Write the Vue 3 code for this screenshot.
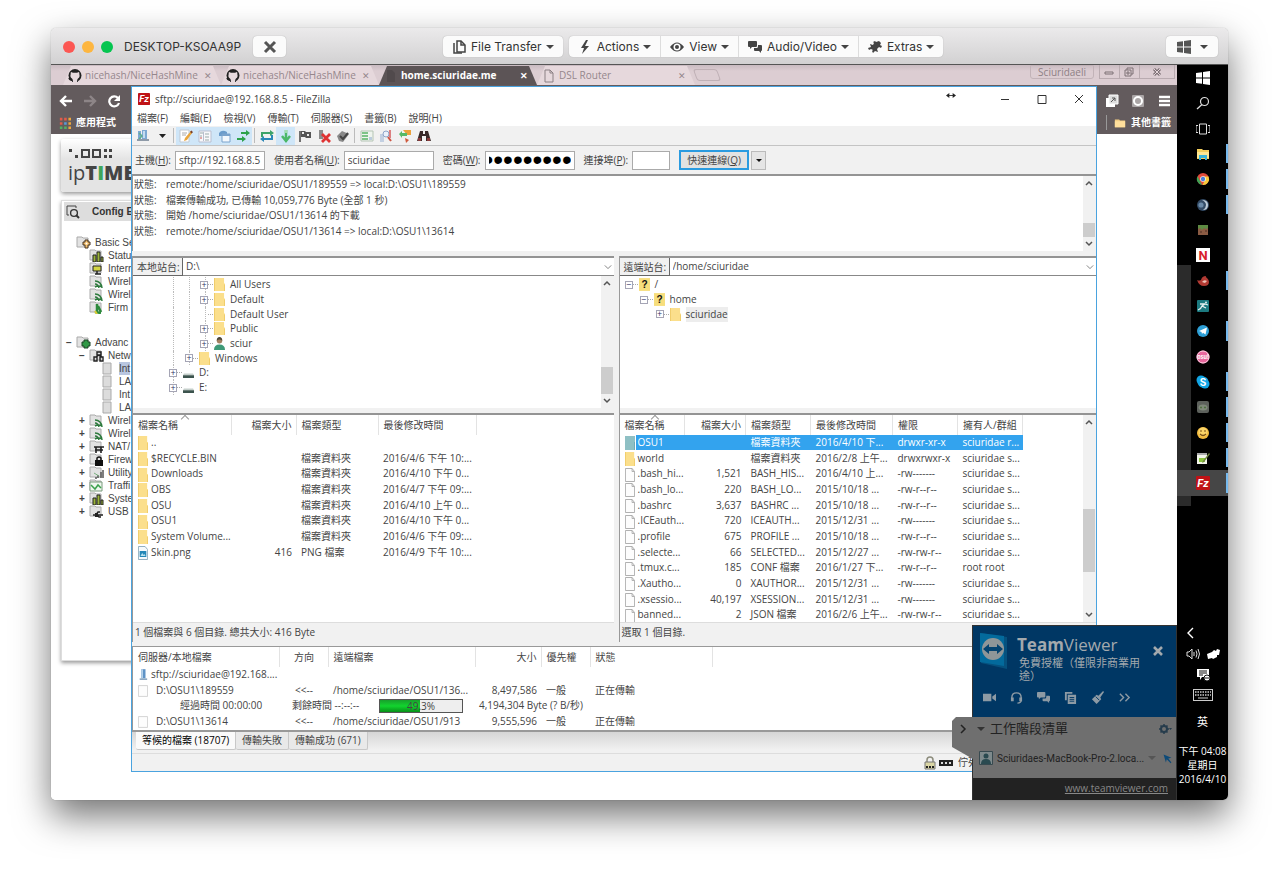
<template>
    <main class="page">
        <section class="mac">
            <header class="titlebar">
                <div class="lights"><i class="red"></i><i class="amber"></i><i class="green"></i></div>
                <h1>DESKTOP-KSOAA9P</h1>
                <button class="pill close" aria-label="Close"><svg viewBox="0 0 14 14" v-html="icons.cross"></svg></button>
                <div class="pills first">
                    <button class="pill"><svg viewBox="0 0 14 14" v-html="icons.files"></svg>File Transfer<b class="caret"></b></button>
                </div>
                <div class="pills">
                    <button v-for="m in macMenus" :key="m.label" class="pill"><svg viewBox="0 0 14 14" v-html="icons[m.icon]"></svg>{{m.label}}<b class="caret"></b></button>
                </div>
                <button class="pill os" aria-label="Windows"><svg viewBox="0 0 14 14" v-html="icons.win"></svg><b class="caret"></b></button>
            </header>

            <div class="desktop">
                <div class="browser">
                    <div class="tabs">
                        <div v-for="(t, i) in tabs" :key="i" class="tab" :class="{active: t.active}">
                            <svg viewBox="0 0 14 14" v-html="icons[t.icon]"></svg>
                            <span>{{t.title}}</span>
                            <button aria-label="Close tab">✕</button>
                        </div>
                        <button class="new-tab" aria-label="New tab"></button>
                        <button class="profile">Sciuridaeli</button>
                        <div class="chrome-ctl">
                            <button aria-label="Minimize"><svg viewBox="0 0 14 10"><path d="M3 5h8v2H3z" fill="none" stroke="#7d7075"/></svg></button>
                            <button aria-label="Restore"><svg viewBox="0 0 14 10"><path d="M3 3h6v6H3zM5 3V1h6v6H9M5 5h2v2H5z" fill="none" stroke="#7d7075"/></svg></button>
                            <button aria-label="Close"><svg viewBox="0 0 14 10"><path d="M4 2l6 6M10 2L4 8" stroke="#7d7075" stroke-width="3"/><path d="M4 2l6 6M10 2L4 8" stroke="#e4d6da"/></svg></button>
                        </div>
                    </div>
                    <div class="toolbar">
                        <div class="nav">
                            <button aria-label="Back"><svg viewBox="0 0 14 14"><path d="M13 7H3M7 2L2 7l5 5" fill="none" stroke="#fff" stroke-width="2.4"/></svg></button>
                            <button aria-label="Forward"><svg viewBox="0 0 14 14"><path d="M1 7h10M7 2l5 5-5 5" fill="none" stroke="#8d8587" stroke-width="2.4"/></svg></button>
                            <button aria-label="Reload"><svg viewBox="0 0 14 14"><path d="M12 9a5 5 0 1 1-1-5" fill="none" stroke="#fff" stroke-width="2.2"/><path d="M13 1v6H7z" fill="#fff"/></svg></button>
                            <i class="omni"></i>
                            <div class="ext">
                                <button aria-label="Open window"><svg viewBox="0 0 14 14"><path d="M1 4h9v9H1z" fill="#fff"/><path d="M4 1h9v9H4z" fill="#ddd" stroke="#fff"/><path d="M6 8l4-4M7 4h3v3" stroke="#555" fill="none"/></svg></button>
                                <button aria-label="Extension"><svg viewBox="0 0 14 14"><rect x="1" y="1" width="12" height="12" rx="1" fill="#aaa5a6"/><circle cx="7" cy="7" r="4" fill="none" stroke="#fff" stroke-width="2"/></svg></button>
                                <button aria-label="Menu"><svg viewBox="0 0 14 14"><path d="M2 3h11M2 7h11M2 11h11" stroke="#fff" stroke-width="2.6"/></svg></button>
                            </div>
                        </div>
                        <div class="bookmarks">
                            <a href="#"><svg viewBox="0 0 14 14" v-html="icons.apps"></svg>應用程式</a>
                            <a href="#" class="other"><svg viewBox="0 0 14 14"><path d="M1 3h5l1 1h6v8H1z" fill="#f3cd83"/><path d="M1 5h12v7H1z" fill="#ffdf9c"/></svg>其他書籤</a>
                        </div>
                    </div>
                    <div class="router">
                        <div class="logo">
                            <svg viewBox="0 0 46 12"><path d="M1 2h3v3H1zM7 8h3v3H7z" fill="#444"/><path d="M14 3h7v7h-7zM25 3h7v7h-7z" fill="none" stroke="#444" stroke-width="2"/><path d="M36 2h3v3h-3zM41 2h3v3h-3zM36 8h3v3h-3zM41 8h3v3h-3z" fill="#444"/></svg>
                            <p>ip<b>T<em>I</em>ME</b></p>
                        </div>
                        <div class="config">
                            <h2><svg viewBox="0 0 14 14"><path d="M3 10H1V1h9v2" fill="none" stroke="#444"/><circle cx="8" cy="8" r="3.4" fill="#ddd" stroke="#333" stroke-width="1.4"/><path d="M10 10l3 3" stroke="#333" stroke-width="2"/></svg>Config E</h2>
                            <ul>
                                <li v-for="(r, i) in routerTree" :key="i" :class="['l' + r.level, {gap: r.gap, on: r.on}]">
                                    <i>{{r.mark}}</i>
                                    <svg viewBox="0 0 15 13" v-html="(r.level < 2 ? icons.rfolder : '') + icons[r.icon]"></svg>
                                    <span>{{r.label}}</span>
                                </li>
                            </ul>
                        </div>
                    </div>
                </div>

                <nav class="taskbar">
                    <i class="ghost"></i>
                    <button v-for="a in apps" :key="a.icon" :class="{run: a.run, cur: a.cur}" :aria-label="a.icon"><svg viewBox="0 0 14 14" v-html="icons[a.icon]"></svg></button>
                    <div class="tray">
                        <svg class="up" viewBox="0 0 14 14"><path d="M9 2L4 7l5 5" fill="none" stroke="#fff" stroke-width="1.4"/></svg>
                        <div class="pair">
                            <svg viewBox="0 0 14 14"><path d="M1 5h2l3-3v10L3 9H1zM8 5v4M10 3.5q2 3.500 0 7M12 2q3 5 0 10" fill="none" stroke="#ddd"/></svg>
                            <svg viewBox="0 0 14 14"><path d="M1 7l1 5 4-1 1 1 4-2V8h2l1-5-3-1-1 2-2-1-2 2z" fill="#fff"/></svg>
                        </div>
                        <svg viewBox="0 0 14 14"><path d="M1 1h12v8H6l-2 3V9H1z" fill="#fff"/><path d="M3 3h8M3 5h8M3 7h4" stroke="#111"/><circle cx="11" cy="10" r="3" fill="#fff" stroke="#111"/><path d="M9 10h4" stroke="#111"/></svg>
                        <svg class="kbd" viewBox="0 0 20 12"><rect x=".5" y=".5" width="19" height="11" fill="none" stroke="#ccc"/><path d="M2 3h16M2 6h16" stroke="#ccc" stroke-width="1.500" stroke-dasharray="1.500 1"/><path d="M5 9h10" stroke="#ccc"/></svg>
                        <span class="ime">英</span>
                        <time>下午 04:08<br>星期日<br>2016/4/10</time>
                    </div>
                </nav>

                <section class="fz">
                    <header class="fz-title">
                        <svg viewBox="0 0 14 14" v-html="icons.fz"></svg>
                        <span>sftp://sciuridae@192.168.8.5 - FileZilla</span>
                        <svg class="resize" viewBox="0 0 12 8"><path d="M2 4h8" stroke="#222"/><path d="M0 4l4-3v6zM12 4L8 1v6z" fill="#222"/></svg>
                        <button aria-label="Minimize"><svg viewBox="0 0 10 10"><path d="M1 5.500h8" stroke="#333"/></svg></button>
                        <button aria-label="Maximize"><svg viewBox="0 0 10 10"><path d="M1 1.500h8v8H1z" fill="none" stroke="#333"/></svg></button>
                        <button aria-label="Close"><svg viewBox="0 0 10 10"><path d="M1 1l8 8M9 1L1 9" stroke="#333"/></svg></button>
                    </header>
                    <div class="menu"><button v-for="m in menus" :key="m">{{m}}</button></div>
                    <div class="tools">
                        <template v-for="(t, i) in tools" :key="i">
                            <i v-if="t === '|'" class="sep"></i>
                            <button v-else :class="{on: t.on}" :aria-label="t.icon"><svg viewBox="0 0 14 14" v-html="icons[t.icon]"></svg></button>
                        </template>
                    </div>
                    <form class="quick" @submit.prevent>
                        <label for="host">主機(<u>H</u>):</label><input id="host" v-model="host">
                        <label for="user">使用者名稱(<u>U</u>):</label><input id="user" v-model="user">
                        <label for="pass">密碼(<u>W</u>):</label><input id="pass" type="password" v-model="pass">
                        <label for="port">連接埠(<u>P</u>):</label><input id="port" class="port" v-model="port">
                        <button class="go">快速連線(<u>Q</u>)</button>
                        <button type="button" class="drop" aria-label="History"><b class="caret"></b></button>
                    </form>
                    <div class="log sunk">
                        <div class="lines">
                            <p v-for="(l, i) in log" :key="i"><span>狀態:</span>{{l}}</p>
                        </div>
                        <div class="sb"><button aria-label="Up"><svg viewBox="0 0 10 10" v-html="icons.up"></svg></button><i class="t1"></i><button aria-label="Down"><svg viewBox="0 0 10 10" v-html="icons.down"></svg></button></div>
                    </div>

                    <div class="panes">
                        <div class="pane local">
                            <div class="site sunk">
                                <label for="lsite">本地站台:</label>
                                <select id="lsite"><option>D:\</option></select>
                                <svg viewBox="0 0 10 10" v-html="icons.chev"></svg>
                            </div>
                            <div class="tree">
                                <ul>
                                    <li v-for="n in localTree" :key="n.name" :class="'d' + n.depth">
                                        <i class="guide"></i>
                                        <i class="box">{{n.leaf ? '' : '+'}}</i><i class="dash"></i>
                                        <svg viewBox="0 0 12 14" v-html="icons[n.icon]"></svg><span>{{n.name}}</span>
                                    </li>
                                </ul>
                                <div class="sb"><button aria-label="Up"><svg viewBox="0 0 10 10" v-html="icons.up"></svg></button><i class="t2"></i><button aria-label="Down"><svg viewBox="0 0 10 10" v-html="icons.down"></svg></button></div>
                            </div>
                            <div class="list sunk">
                                <table class="ltable">
                                    <colgroup><col class="c98"><col class="c65"><col class="c82"><col class="c98"></colgroup>
                                    <thead><tr><th class="sort">檔案名稱</th><th class="num">檔案大小</th><th>檔案類型</th><th>最後修改時間</th></tr></thead>
                                    <tbody>
                                        <tr v-for="f in localFiles" :key="f[0]">
                                            <td><svg viewBox="0 0 12 14" preserveAspectRatio="none" v-html="icons[f[4] || 'folder']"></svg>{{f[0]}}</td>
                                            <td class="num">{{f[1]}}</td><td>{{f[2]}}</td><td>{{f[3]}}</td>
                                        </tr>
                                    </tbody>
                                </table>
                            </div>
                            <p class="sum">1 個檔案與 6 個目錄. 總共大小: 416 Byte</p>
                        </div>

                        <div class="pane remote">
                            <div class="site sunk">
                                <label for="rsite">遠端站台:</label>
                                <select id="rsite"><option>/home/sciuridae</option></select>
                                <svg viewBox="0 0 10 10" v-html="icons.chev"></svg>
                            </div>
                            <div class="tree">
                                <ul>
                                    <li class="r0"><i class="box">−</i><i class="dash"></i><svg viewBox="0 0 12 14" v-html="icons.unknown"></svg><span>/</span></li>
                                    <li class="r1"><i class="box">−</i><i class="dash"></i><svg viewBox="0 0 12 14" v-html="icons.unknown"></svg><span>home</span></li>
                                    <li class="r2"><i class="box">+</i><i class="dash"></i><svg viewBox="0 0 12 14" v-html="icons.folder"></svg><span class="hl">sciuridae</span></li>
                                </ul>
                            </div>
                            <div class="list sunk">
                                <table class="rtable">
                                    <colgroup><col class="c65"><col class="c61"><col class="c65"><col class="c82"><col class="c65"><col class="c65"></colgroup>
                                    <thead><tr><th class="sort">檔案名稱</th><th class="num">檔案大小</th><th>檔案類型</th><th>最後修改時間</th><th>權限</th><th>擁有人/群組</th></tr></thead>
                                    <tbody>
                                        <tr v-for="(f, i) in remoteFiles" :key="f[0]" :class="{sel: i === 0}">
                                            <td><svg viewBox="0 0 12 14" preserveAspectRatio="none" v-html="icons[i === 0 ? 'folderSel' : i === 1 ? 'folder' : 'doc']"></svg>{{f[0]}}</td>
                                            <td class="num">{{f[1]}}</td><td>{{f[2]}}</td><td>{{f[3]}}</td><td>{{f[4]}}</td><td>{{f[5]}}</td>
                                        </tr>
                                    </tbody>
                                </table>
                                <div class="sb"><button aria-label="Up"><svg viewBox="0 0 10 10" v-html="icons.up"></svg></button><i class="t3"></i><button aria-label="Down"><svg viewBox="0 0 10 10" v-html="icons.down"></svg></button></div>
                            </div>
                            <p class="sum">選取 1 個目錄.</p>
                        </div>
                    </div>

                    <div class="queue">
                        <table>
                            <colgroup><col class="c146"><col class="c49"><col class="c147"><col class="c66"><col class="c49"><col class="c122"></colgroup>
                            <thead><tr><th>伺服器/本地檔案</th><th class="mid">方向</th><th>遠端檔案</th><th class="num">大小</th><th>優先權</th><th>狀態</th></tr></thead>
                            <tbody>
                                <tr><td colspan="6"><svg viewBox="0 0 12 14" v-html="icons.server"></svg>sftp://sciuridae@192.168....</td></tr>
                                <tr><td><svg class="doc" viewBox="0 0 12 14" v-html="icons.blank"></svg>D:\OSU1\189559</td><td class="mid">&lt;&lt;--</td><td>/home/sciuridae/OSU1/136...</td><td class="num">8,497,586</td><td>一般</td><td>正在傳輸</td></tr>
                                <tr><td colspan="6"><div class="progress"><span class="el">經過時間 00:00:00</span><span class="left">剩餘時間 --:--:--</span><div class="bar"><i :style="{width: percent + '%'}"></i><b>{{percent}}%</b></div><span>4,194,304 Byte (? B/秒)</span></div></td></tr>
                                <tr><td><svg class="doc" viewBox="0 0 12 14" v-html="icons.blank"></svg>D:\OSU1\13614</td><td class="mid">&lt;&lt;--</td><td>/home/sciuridae/OSU1/913</td><td class="num">9,555,596</td><td>一般</td><td>正在傳輸</td></tr>
                            </tbody>
                        </table>
                    </div>
                    <div class="qtabs">
                        <button class="on">等候的檔案 (18707)</button><button>傳輸失敗</button><button>傳輸成功 (671)</button>
                    </div>
                    <footer>
                        <svg viewBox="0 0 14 14"><path d="M4 6V4a3 3 0 0 1 6 0v2" fill="none" stroke="#8c8c7c" stroke-width="1.500"/><path d="M2 6h10v7H2z" fill="#d9d5a4" stroke="#777"/><path d="M3 11h8" stroke="#222" stroke-width="2" stroke-dasharray="2 1"/></svg>
                        <svg viewBox="0 0 14 14"><path d="M0 4h14v6H0z" fill="#222"/><path d="M2 7h2M6 7h2M10 7h2" stroke="#ddd" stroke-width="2"/></svg>
                        <span>佇列</span>
                    </footer>
                </section>

                <aside class="tv">
                    <button class="handle" aria-label="Collapse"><svg viewBox="0 0 10 10"><path d="M3 1l4 4-4 4" fill="none" stroke="#222" stroke-width="1.500"/></svg></button>
                    <div class="tv-top">
                        <div class="tv-head">
                            <svg class="tvlogo" viewBox="0 0 30 38"><path d="M2 1l26 4v32L2 31z" fill="#06517e"/><path d="M1 1l24 3v30L1 30z" fill="#036a9c"/><circle cx="14" cy="17" r="11" fill="#8f9698"/><path d="M4 17l6-5v3h8v-3l6 5-6 5v-3h-8v3z" fill="#05436f"/></svg>
                            <div><h3><b>Team</b>Viewer</h3><p>免費授權（僅限非商業用途）</p></div>
                            <button aria-label="Close"><svg viewBox="0 0 14 14"><path d="M3 3l8 8M11 3l-8 8" stroke="#a3a9ad" stroke-width="2.6"/></svg></button>
                        </div>
                        <div class="tv-icons">
                            <button v-for="n in ['cam', 'headset', 'chatg', 'copy', 'brush', 'more']" :key="n" :aria-label="n"><svg viewBox="0 0 14 14" v-html="icons[n]"></svg></button>
                        </div>
                    </div>
                    <div class="tv-list">
                        <h4><b class="caret"></b>工作階段清單<svg viewBox="0 0 14 14"><circle cx="6" cy="7" r="3" fill="none" stroke="#263c4c" stroke-width="2"/><path d="M6 2v2M6 10v2M1 7h2M9 7h2M2.500 3.500l1 1M8.500 9.500l1 1M9.500 3.500l-1 1M3.500 9.500l-1 1" stroke="#263c4c" stroke-width="1.500"/><path d="M11 6h3l-1.500 2z" fill="#263c4c"/></svg></h4>
                        <div class="peer">
                            <svg viewBox="0 0 14 14"><path d="M.5.5h13v13H.5z" fill="#7e8a8c" stroke="#384a50"/><circle cx="7" cy="5" r="2.500" fill="#2a4a50"/><path d="M2 13q0-5 5-5t5 5z" fill="#2a4a50"/></svg>
                            <span>Sciuridaes-MacBook-Pro-2.loca...</span><b class="caret"></b>
                            <svg class="cursor" viewBox="0 0 14 14"><path d="M2 2l10 4-4 1 4 5-1 1-5-5-1 4z" fill="#0d4a78"/></svg>
                        </div>
                    </div>
                    <div class="tv-foot"><a href="#">www.teamviewer.com</a></div>
                </aside>
            </div>
        </section>
    </main>
</template>

<script setup>
    import {ref} from "vue";

    const host = ref('sftp://192.168.8.5');
    const user = ref('sciuridae');
    const pass = ref('hunter222');
    const port = ref('');
    const percent = ref(49.3);

    const wifi = '<path d="M6 12a7 7 0 0 1 7-0M6 6q6 0 7 7M6 9q3 0 4 4" fill="none" stroke="#2c7a3c" stroke-width="1.500"/>';
    const bubbles = (c) => `<path d="M0 2q0-1 1-1h7q1 0 1 1v4q0 1-1 1H4L2 9V7H1q-1 0-1-1z" fill="${c}"/><path d="M10 5h3q1 0 1 1v4q0 1-1 1v2l-2-2H7q-1 0-1-1V8h3q1 0 1-2z" fill="${c}"/>`;
    const github = '<path d="M5 13V11Q2 12 1 9M9 13v-2.500" fill="none" stroke="#222" stroke-width="1.600"/><circle cx="7" cy="6.500" r="6.500" fill="#222"/><path d="M3 3l2 .7h4L11 3q.5 1 .3 2 1 3-1.300 4.500Q9 10 9 13H5q0-3-1-3.500Q1.700 8 2.700 5 2.500 4 3 3z" fill="#e6d9dd"/>';

    const icons = {
        cross: '<path d="M2 2l10 10M12 2L2 12" stroke="#555" stroke-width="3"/>',
        files: '<path d="M5 1h4l4 4v7H5z" fill="none" stroke="#444" stroke-width="1.500"/><path d="M9 1v4h4M2 3v10h8" fill="none" stroke="#444" stroke-width="1.500"/>',
        bolt: '<path d="M8 0L3 8h3l-2 6 7-8H7l3-6z" fill="#444"/>',
        eye: '<path d="M0 7q7-9 14 0-7 9-14 0z" fill="#444"/><circle cx="7" cy="7" r="3.500" fill="#fff"/><circle cx="7" cy="7" r="2" fill="#444"/>',
        chat: bubbles('#444'),
        puzzle: '<path d="M0 8l3-1-1-3 3 1 1-2-1-1 2-1 1 1 3-1 2 2-1 2 2 1-1 2-2-1-2 2 1 3-3-1-2 2-1-2 1-1-2-1-2 1z" fill="#444"/>',
        win: '<path d="M0 2l6-.8V6.500H0zM7 1l7-1v6.500H7zM0 7.500h6v5.300L0 12zM7 7.500h7V14l-7-1z" fill="#555"/>',
        winw: '<path d="M0 2l6-.8V6.500H0zM7 1l7-1v6.500H7zM0 7.500h6v5.300L0 12zM7 7.500h7V14l-7-1z" fill="#fff"/>',
        github,
        page: '<path d="M3 1h5l3 3v9H3zM8 1v3h3" fill="none" stroke="#8b8084"/>',
        pagedark: '<path d="M3 1h5l3 3v9H3z" fill="#514a4c"/>',
        apps: '<path d="M1 1h3v3H1zM1 6h3v3H1z" fill="#e25b4a"/><path d="M6 1h3v3H6z" fill="#e25b4a"/><path d="M11 1h3v3h-3zM11 6h3v3h-3z" fill="#eda63c"/><path d="M6 6h3v3H6z" fill="#5a9bd8"/><path d="M1 11h3v3H1zM6 11h3v3H6z" fill="#53b063"/><path d="M11 11h3v3h-3z" fill="#eda63c"/>',
        rfolder: '<path d="M1 1h5l1 1h5v9H1z" fill="#e2e2e2" stroke="#aaa"/>',
        gold: '<path d="M9 4h3v2h2v3h-2v3H9V9H7V6h2z" fill="#f0bd6c" stroke="#432"/><circle cx="10.500" cy="7.500" r="1" fill="#fff"/>',
        plus: '<path d="M8 4h4v2h2v4h-2v2H8v-2H6V6h2z" fill="#2f9845" stroke="#1d4527"/>',
        bars: '<path d="M4 6h3v7H4zM8 3h3v10H8zM12 8h2v5h-2z" fill="#9bb43a" stroke="#222"/>',
        monitor: '<path d="M4 4h8v5H4z" fill="#d2d545" stroke="#222"/><path d="M8 9v3M6 12h6" stroke="#222" stroke-width="1.500"/>',
        wifi,
        firm: '<path d="M8 3v8M6 11l6 1M9 5l3 6" stroke="#2c8a3c" stroke-width="2.500"/><path d="M6 10l2 3" stroke="#dacb33" stroke-width="2"/>',
        net: '<path d="M8 3h4v3H8zM5 8h3v4H5zM11 8h3v4h-3zM7 8l3-2 3 2" fill="none" stroke="#222" stroke-width="1.400"/>',
        leaf: '<path d="M3 1h8v11H3z" fill="#dcdcdc" stroke="#aaa"/>',
        nat: '<path d="M5 7h10M6 10h8M7 7v6M12 7v6" stroke="#222" stroke-width="1.600"/>',
        lock: '<path d="M6 7h8v6H6z" fill="#111"/><path d="M8 7V5q2-2 4 0v2" fill="none" stroke="#111" stroke-width="1.500"/>',
        util: '<path d="M6 12h2M9 12V9M12 12V6M14 12V4" stroke="#555" stroke-width="1.500"/><path d="M5 7l5 3" stroke="#79b07e"/>',
        traffic: '<path d="M1 3h12v9H1z" fill="#eff7ef" stroke="#7a9a7c"/><path d="M2 6l4 4 3-4 3 3" fill="none" stroke="#3ba14c" stroke-width="1.500"/>',
        usb: '<path d="M4 10h10M7 10l2-3h2M8 10l2 2h2" stroke="#222" fill="none" stroke-width="1.500"/><path d="M6 8h3v4H6z" fill="#222"/>',
        search: '<circle cx="8.500" cy="5.500" r="4" fill="none" stroke="#ddd" stroke-width="1.200"/><path d="M6 8.500L1 13" stroke="#ddd" stroke-width="1.300"/>',
        view: '<path d="M3.500 2h7v10h-7zM2 3.500H0v7h2M12 3.500h2v7h-2" fill="none" stroke="#ddd"/>',
        folderw: '<path d="M1 2h5l1 1h6v9H1z" fill="#f5cf5c"/><path d="M1 5h12v6H1z" fill="#ffe792"/><path d="M3 8h8v5h-2v-2H5v2H3z" fill="#3bb4d8"/>',
        chrome: '<circle cx="7" cy="7" r="6" fill="#e04a3b"/><path d="M1.500 4.300L6 13A6 6 0 0 1 1.500 4.300z" fill="#3da457"/><path d="M7 4.500h5.500A6 6 0 0 1 6.500 13L9 8z" fill="#f7cb3c"/><circle cx="7" cy="7" r="2.800" fill="#fff"/><circle cx="7" cy="7" r="2.200" fill="#4a80d8"/>',
        ts: '<circle cx="7" cy="7" r="6" fill="#334b66"/><path d="M6 2q6 0 6 5t-5 5q3-2 3-5T6 2z" fill="#c0cdd8"/><circle cx="5" cy="7" r="2.600" fill="#6a8aa8"/>',
        mine: '<path d="M2 2h10v10H2z" fill="#8a5b43"/><path d="M2 2h10v3l-2 1-2-1-2 2-2-2-2 1z" fill="#5d8a42"/><path d="M4 8h2v2H4zM9 7h2v2H9z" fill="#6b4432"/>',
        netflix: '<path d="M0 0h14v14H0z" fill="#fff"/><text x="7" y="12" font-size="13" font-weight="bold" font-family="Roboto, sans-serif" text-anchor="middle" fill="#d8202c" >N</text>',
        garena: '<path d="M1 6q2 1 4 0 1-4 5-4-1 1 1 2 2 2 2 4 0 4-5 4-5 0-7-6z" fill="#b23a33"/><path d="M6 8q2-3 5-1l-2 2z" fill="#eec3b8"/>',
        teal: '<rect x="1" y="1" width="12" height="12" rx="1" fill="#1c7a80"/><circle cx="10" cy="3.500" r="1" fill="#e5f1f0"/><path d="M2 11q3-1 4-4l3-2 3 1M4 5l5 0M6 7l4 2" fill="none" stroke="#e5f1f0" stroke-width="1.300"/>',
        telegram: '<circle cx="7" cy="7" r="6" fill="#2d9fd6"/><path d="M3 7l8-3.500L9.500 10.500 7 8.800 6 10 5.500 8z" fill="#fff"/>',
        osu: '<circle cx="7" cy="7" r="6.500" fill="#e9679d"/><circle cx="7" cy="7" r="6" fill="none" stroke="#fbd2e1"/><text x="7" y="9" font-size="5.500" font-weight="bold" font-family="Inter, sans-serif" text-anchor="middle" fill="#fff">osu!</text>',
        skype: '<circle cx="5" cy="5" r="4.500" fill="#12a5e4"/><circle cx="9" cy="9" r="4.500" fill="#12a5e4"/><circle cx="7" cy="7" r="5.500" fill="#12a5e4"/><text x="7" y="10.500" font-size="10" font-weight="bold" font-family="Inter, sans-serif" text-anchor="middle" fill="#fff">S</text>',
        gray: '<rect x="1" y="1" width="12" height="12" rx="2" fill="#5d615c"/><ellipse cx="7" cy="7.500" rx="4.500" ry="3" fill="#7e8879"/><path d="M4 7.500h2M8 7.500h2" stroke="#4f7040" stroke-width="1.500"/>',
        smile: '<circle cx="7" cy="7" r="6" fill="#f4bb3e"/><circle cx="7" cy="6" r="4.500" fill="#fbd468"/><path d="M4 5h2M8 5h2M4 8q3 3 6 0" fill="none" stroke="#7a5015" stroke-width="1.200"/>',
        notepad: '<path d="M1 2h10v11H1z" fill="#f3f5ea"/><path d="M1 2h10v2H1z" fill="#aaa"/><path d="M3 7h6v4H3z" fill="#8cc63e"/><path d="M13 2L7 10l-1 2 2-1 6-8z" fill="#6f8540"/>',
        fz: '<rect width="14" height="14" rx="1" fill="#bf1216"/><text x="7" y="11" font-size="11" font-weight="bold" font-style="italic" font-family="Roboto, sans-serif" text-anchor="middle" fill="#fff">Fz</text>',
        up: '<path d="M2 7l3-3 3 3" fill="none" stroke="#555" stroke-width="1.500"/>',
        down: '<path d="M2 3l3 3 3-3" fill="none" stroke="#555" stroke-width="1.500"/>',
        chev: '<path d="M1 3l4 4 4-4" fill="none" stroke="#666"/>',
        folder: '<path d="M0 0h11v6h1v8H0z" fill="#fbdf8c"/><path d="M0 0h1v14H0zM11 7h1v7h-1z" fill="#efcb69"/>',
        folderSel: '<path d="M0 0h12v14H0z" fill="#8fc0c4"/><path d="M11 6h1v8h-1z" fill="#6aa6b5"/>',
        unknown: '<path d="M0 0h12v14H0z" fill="#f7de7c"/><text x="6" y="11" font-size="11" font-weight="bold" font-family="Liberation Sans, sans-serif" text-anchor="middle" fill="#111">?</text>',
        person: '<circle cx="6" cy="4" r="3" fill="#a58161"/><path d="M3 4q0-4 3-4t3 4q-3-3-6 0z" fill="#4b4535"/><path d="M0 14q0-6 6-6t6 6z" fill="#3f9a78"/>',
        drive: '<path d="M1 8h10l1 2H0z" fill="#c5cfcb"/><path d="M0 10h12v3H0z" fill="#3c544e"/>',
        doc: '<path d="M.5.5h8l3 3v10H.5zM8.500.5v3h3" fill="#fdfdfd" stroke="#aaa"/>',
        blank: '<path d="M.5.5h11v13H.5z" fill="#fdfdfd" stroke="#ccc"/>',
        png: '<path d="M.5.5h8l3 3v10H.5z" fill="#f5f9fc" stroke="#8aa9bb"/><path d="M2 5h8v6H2z" fill="#2387b8"/><path d="M3 10l2-3 2 2 1-1 1 2z" fill="#b6e0ee"/>',
        server: '<path d="M4 0h5v11H4z" fill="#5f93c6"/><path d="M4 0h2v11H4z" fill="#b4d1ea"/><path d="M2 11h9v2H2z" fill="#8fa9c2"/>',
        sites: '<path d="M2 2h3v8H2zM6 1h5v9H6z" fill="#7da9d3"/><path d="M7 2h2v7H7z" fill="#c4dcf1"/><path d="M1 10h12v2H1z" fill="#8e9aa8"/><path d="M3 4l3 3-3 3" fill="none" stroke="#5fae8f" stroke-width="1.500"/>',
        arrow: '<path d="M4 5h7L7.500 9z" fill="#222"/>',
        edit: '<path d="M1 1h9v12H1z" fill="#fff" stroke="#c2c9d0"/><path d="M3 4h5M3 6h4" stroke="#aaa"/><path d="M12 2L6 9l-1 3 3-1 5-7z" fill="#e9a63c"/><path d="M12 2l1 2" stroke="#7a3f28" stroke-width="2"/>',
        panes: '<path d="M1 2h12v11H1z" fill="#f8f8fb" stroke="#b9bfd0"/><path d="M2 4h3M2 7h2M7 5h4M7 8h4M7 11h4" stroke="#9aa"/><path d="M5.500 3v9" stroke="#b9bfd0"/><path d="M2 9h2" stroke="#c55"/>',
        remote: '<path d="M2 4q3-4 8-1v4H2z" fill="#6b9ccb"/><path d="M5 5h8v8H5z" fill="#f3f8fd" stroke="#7aa3cc"/><path d="M5 5h8v2H5z" fill="#7aa3cc"/>',
        transfer: '<path d="M5 3h5V1l4 3-4 3V5H5zM1 9h5V7l4 3-4 3v-2H1z" fill="#2ca24b"/>',
        refresh: '<path d="M1 8V3h9V1l4 3-4 3V5H3v3z" fill="#3da36a"/><path d="M13 6v5H4v2l-4-3 4-3v2h7V6z" fill="#2b88b8"/>',
        process: '<path d="M7 1v9M3 7l4 5 4-5" fill="none" stroke="#4bb868" stroke-width="2.500"/><path d="M7 1v3" stroke="#a2ddb0" stroke-width="3"/>',
        cancel: '<path d="M2 2v11" stroke="#444" stroke-width="1.500"/><path d="M3 2h4l1 1h5v6H8L7 8H3z" fill="#555"/><path d="M4 3h2v2H4zM9 5h2v2H9z" fill="#eee"/>',
        disconnect: '<path d="M2 1h4v9H2z" fill="#8c8c8c"/><path d="M5 5l8 8M13 5l-8 8" stroke="#df3333" stroke-width="2.800"/>',
        reconnect: '<path d="M1 7l5-5 7 3-6 8-4-1z" fill="#898989"/><path d="M4 7l3 3 5-6" fill="none" stroke="#444" stroke-width="2"/>',
        filter: '<path d="M1 2h12v10H1z" fill="#eef4ee" stroke="#b5c5b5"/><path d="M2 4h6M2 7h6M2 10h6" stroke="#58b266" stroke-width="1.500"/><path d="M9 8h3v3H9z" fill="#bcd"/>',
        compare: '<path d="M1 5h4v8H1z" fill="#c3d0e2"/><circle cx="7" cy="5" r="3" fill="#eaf1fa" stroke="#8fa4c8"/><path d="M9 8l3 4" stroke="#cc5544" stroke-width="2"/><path d="M11 1v8" stroke="#dc8080" stroke-width="2"/>',
        sync: '<path d="M5 1h8v5H9z" fill="#eba23c"/><path d="M1 5l3-3v2h5v3H4v2z" fill="#56b968"/><path d="M7 9l4 2-3 3z" fill="#cf5a3d"/>',
        find: '<path d="M3 2h3v3h2V2h3l3 10H9V7H5v5H0z" fill="#3a2a2a"/><path d="M1 9h3v3H1zM10 9h3v3h-3z" fill="#8a3a3a"/>',
        cam: '<path d="M0 3h9v8H0zM10 6l4-3v8l-4-3z" fill="#8d9aa4"/>',
        headset: '<path d="M2 9V7q0-5 5-5t5 5v2M12 10q0 3-4 3" fill="none" stroke="#8d9aa4" stroke-width="1.500"/><path d="M1 7h3v4H1zM10 7h3v4h-3z" fill="#8d9aa4"/>',
        chatg: bubbles('#8d9aa4'),
        copy: '<path d="M1 1h8v2H3v7H1z" fill="#8d9aa4"/><path d="M4 4h9v10H4z" fill="#8d9aa4"/><path d="M6 7h5M6 9h5M6 11h5" stroke="#003764"/>',
        brush: '<path d="M13 0L8 5 6 4 1 9l5 5 5-5-1-2 4-6z" fill="#8d9aa4"/><path d="M5 6l4 4" stroke="#003764"/>',
        more: '<path d="M2 3l4 4-4 4M8 3l4 4-4 4" fill="none" stroke="#8d9aa4" stroke-width="1.500"/>'
    };

    const macMenus = [
        {label: 'Actions', icon: 'bolt'},
        {label: 'View', icon: 'eye'},
        {label: 'Audio/Video', icon: 'chat'},
        {label: 'Extras', icon: 'puzzle'}
    ];

    const tabs = [
        {title: 'nicehash/NiceHashMine', icon: 'github'},
        {title: 'nicehash/NiceHashMine', icon: 'github'},
        {title: 'home.sciuridae.me', icon: 'pagedark', active: true},
        {title: 'DSL Router', icon: 'page'}
    ];

    const routerTree = [
        {level: 0, label: 'Basic Se', icon: 'gold'},
        {level: 1, label: 'Statu', icon: 'bars'},
        {level: 1, label: 'Intern', icon: 'monitor'},
        {level: 1, label: 'Wirel', icon: 'wifi'},
        {level: 1, label: 'Wirel', icon: 'wifi'},
        {level: 1, label: 'Firm', icon: 'firm'},
        {level: 0, label: 'Advanc', icon: 'plus', mark: '−', gap: true},
        {level: 1, label: 'Netw', icon: 'net', mark: '−'},
        {level: 2, label: 'Int', icon: 'leaf', on: true},
        {level: 2, label: 'LA', icon: 'leaf'},
        {level: 2, label: 'Int', icon: 'leaf'},
        {level: 2, label: 'LA', icon: 'leaf'},
        {level: 1, label: 'Wirel', icon: 'wifi', mark: '+'},
        {level: 1, label: 'Wirel', icon: 'wifi', mark: '+'},
        {level: 1, label: 'NAT/', icon: 'nat', mark: '+'},
        {level: 1, label: 'Firew', icon: 'lock', mark: '+'},
        {level: 1, label: 'Utility', icon: 'util', mark: '+'},
        {level: 1, label: 'Traffi', icon: 'traffic', mark: '+'},
        {level: 1, label: 'Syste', icon: 'bars', mark: '+'},
        {level: 1, label: 'USB', icon: 'usb', mark: '+'}
    ];

    const apps = [
        {icon: 'winw'}, {icon: 'search'}, {icon: 'view'},
        {icon: 'folderw', run: true}, {icon: 'chrome', run: true}, {icon: 'ts', run: true},
        {icon: 'mine'}, {icon: 'netflix'}, {icon: 'garena', run: true}, {icon: 'teal'},
        {icon: 'telegram', run: true}, {icon: 'osu'}, {icon: 'skype', run: true},
        {icon: 'gray', run: true}, {icon: 'smile', run: true}, {icon: 'notepad', run: true},
        {icon: 'fz', run: true, cur: true}
    ];

    const menus = ['檔案(F)', '編輯(E)', '檢視(V)', '傳輸(T)', '伺服器(S)', '書籤(B)', '說明(H)'];

    const tools = [
        {icon: 'sites'}, {icon: 'arrow'}, '|',
        {icon: 'edit', on: true}, {icon: 'panes', on: true}, {icon: 'remote', on: true}, {icon: 'transfer', on: true}, '|',
        {icon: 'refresh'}, {icon: 'process', on: true}, {icon: 'cancel'}, {icon: 'disconnect'}, {icon: 'reconnect'}, '|',
        {icon: 'filter'}, {icon: 'compare'}, {icon: 'sync'}, {icon: 'find'}
    ];

    const log = [
        'remote:/home/sciuridae/OSU1/189559 => local:D:\\OSU1\\189559',
        '檔案傳輸成功, 已傳輸 10,059,776 Byte (全部 1 秒)',
        '開始 /home/sciuridae/OSU1/13614 的下載',
        'remote:/home/sciuridae/OSU1/13614 => local:D:\\OSU1\\13614'
    ];

    const localTree = [
        {name: 'All Users', depth: 2, icon: 'folder'},
        {name: 'Default', depth: 2, icon: 'folder'},
        {name: 'Default User', depth: 2, icon: 'folder', leaf: true},
        {name: 'Public', depth: 2, icon: 'folder'},
        {name: 'sciur', depth: 2, icon: 'person'},
        {name: 'Windows', depth: 1, icon: 'folder'},
        {name: 'D:', depth: 0, icon: 'drive'},
        {name: 'E:', depth: 0, icon: 'drive'}
    ];

    const localFiles = [
        ['..', '', '', ''],
        ['$RECYCLE.BIN', '', '檔案資料夾', '2016/4/6 下午 10:...'],
        ['Downloads', '', '檔案資料夾', '2016/4/10 下午 0...'],
        ['OBS', '', '檔案資料夾', '2016/4/7 下午 09:...'],
        ['OSU', '', '檔案資料夾', '2016/4/10 上午 0...'],
        ['OSU1', '', '檔案資料夾', '2016/4/10 下午 0...'],
        ['System Volume...', '', '檔案資料夾', '2016/4/6 下午 09:...'],
        ['Skin.png', '416', 'PNG 檔案', '2016/4/9 下午 10:...', 'png']
    ];

    const remoteFiles = [
        ['OSU1', '', '檔案資料夾', '2016/4/10 下...', 'drwxr-xr-x', 'sciuridae r...'],
        ['world', '', '檔案資料夾', '2016/2/8 上午...', 'drwxrwxr-x', 'sciuridae s...'],
        ['.bash_hi...', '1,521', 'BASH_HIS...', '2016/4/10 上...', '-rw-------', 'sciuridae s...'],
        ['.bash_lo...', '220', 'BASH_LO...', '2015/10/18 ...', '-rw-r--r--', 'sciuridae s...'],
        ['.bashrc', '3,637', 'BASHRC ...', '2015/10/18 ...', '-rw-r--r--', 'sciuridae s...'],
        ['.ICEauth...', '720', 'ICEAUTH...', '2015/12/31 ...', '-rw-------', 'sciuridae s...'],
        ['.profile', '675', 'PROFILE ...', '2015/10/18 ...', '-rw-r--r--', 'sciuridae s...'],
        ['.selecte...', '66', 'SELECTED...', '2015/12/27 ...', '-rw-rw-r--', 'sciuridae s...'],
        ['.tmux.c...', '185', 'CONF 檔案', '2016/1/27 下...', '-rw-r--r--', 'root root'],
        ['.Xautho...', '0', 'XAUTHOR...', '2015/12/31 ...', '-rw-------', 'sciuridae s...'],
        ['.xsessio...', '40,197', 'XSESSION...', '2015/12/31 ...', '-rw-------', 'sciuridae s...'],
        ['banned...', '2', 'JSON 檔案', '2016/2/6 上午...', '-rw-rw-r--', 'sciuridae s...']
    ];
</script>

<style>
    body {
        background: #fff;
    }
</style>

<style scoped>
    * {
        box-sizing: border-box;
        margin: 0;
        padding: 0;
    }

    .page {
        display: flex;
        min-height: 100vh;
        padding: 28px 52px 74px 51px;
        overflow: hidden;
        font: 10px/15px "Open Sans", "Noto Sans CJK TC", sans-serif;
        color: #444;
    }

    button {
        font: inherit;
        color: inherit;
        background: none;
        border: none;
        white-space: nowrap;
    }

    svg {
        display: block;
        flex: none;
        width: 14px;
        height: 14px;
    }

    i, em {
        font-style: normal;
    }

    ul {
        list-style: none;
    }

    .caret {
        flex: none;
        width: 0;
        height: 0;
        border: 4px solid transparent;
        border-top-color: #444;
        border-bottom: none;
    }

    /* outer window */
    .mac {
        display: flex;
        flex: 1;
        flex-direction: column;
        min-width: 0;
        border-radius: 5px;
        box-shadow: 0 0 1px rgba(0, 0, 0, .4), 0 16px 36px rgba(0, 0, 0, .55);
    }

    .titlebar {
        display: flex;
        align-items: center;
        height: 37px;
        padding: 1px 10px 0 12px;
        border-bottom: 1px solid #555;
        border-radius: 5px 5px 0 0;
        background: linear-gradient(#ebeaeb, #d2d1d2);
        font: 12px/21px Inter, sans-serif;
        color: #333;
    }

    .lights {
        display: flex;
        gap: 7px;
        width: 61px;
    }

    .lights i {
        width: 12px;
        height: 12px;
        border-radius: 50%;
    }

    .red { background: #fc5753; }
    .amber { background: #fdb640; }
    .green { background: #05c550; }

    .titlebar h1 {
        width: 129px;
        font-size: 12px;
        font-weight: 400;
        white-space: nowrap;
    }

    .pills {
        display: flex;
        margin-left: 6px;
        border-radius: 4px;
        background: #fbfbfb;
        box-shadow: 0 0 1px #999;
    }

    .pills.first {
        margin-left: 157px;
    }

    .pill {
        display: flex;
        align-items: center;
        justify-content: center;
        height: 21px;
        padding: 0 9px;
    }

    .pill + .pill {
        border-left: 1px solid #ddd;
    }

    .pill svg {
        margin-right: 5px;
    }

    .pill .caret {
        margin-left: 4px;
    }

    .pill.close, .pill.os {
        border-radius: 4px;
        background: #fbfbfb;
        box-shadow: 0 0 1px #999;
    }

    .pill.close {
        width: 33px;
        padding: 0;
    }

    .pill.close svg {
        margin: 0;
    }

    .pill.os {
        margin-left: auto;
        width: 52px;
        padding: 0;
    }

    .desktop {
        position: relative;
        display: flex;
        flex: 1;
        overflow: hidden;
        border-radius: 0 0 5px 5px;
        background: #fff;
    }

    /* browser behind */
    .browser {
        flex: 1;
        min-width: 0;
        background: #fff;
    }

    .tabs {
        display: flex;
        align-items: flex-end;
        height: 20px;
        padding: 0 2px 0 9px;
        background: linear-gradient(#c9bbc1, #dccdd2 6px);
    }

    .tab {
        position: relative;
        display: flex;
        align-items: center;
        width: 158px;
        height: 19px;
        padding: 0 6px 0 8px;
        color: #95878c;
        isolation: isolate;
    }

    .tab::before {
        content: "";
        position: absolute;
        inset: 0 -3px 0 3px;
        z-index: -1;
        clip-path: polygon(8px 0, calc(100% - 8px) 0, 100% 100%, 0 100%);
        background: #e6d8dc;
    }

    .tab span {
        flex: 1;
        margin-left: 3px;
        white-space: nowrap;
    }

    .tab button {
        font-size: 9px;
    }

    .tab.active {
        font-weight: 700;
        color: #fff;
    }

    .tab.active::before {
        background: #5c5456;
    }

    .new-tab {
        width: 24px;
        height: 12px;
        margin: 0 0 4px 3px;
        border: 1px solid #bfb0b5;
        border-radius: 3px;
        transform: skewX(20deg);
    }

    .profile {
        height: 14px;
        margin: 0 5px auto auto;
        padding: 0 7px;
        border: 1px solid #c2b3b8;
        border-radius: 0 0 3px 3px;
        line-height: 13px;
        color: #8d8085;
    }

    .chrome-ctl {
        display: flex;
        margin-bottom: auto;
    }

    .chrome-ctl button {
        width: 20px;
        height: 14px;
        padding-left: 2px;
        border: 1px solid #b9abb0;
        border-width: 0 0 1px 1px;
    }

    .chrome-ctl button:last-child {
        width: 36px;
        padding-left: 10px;
        border-right-width: 1px;
    }

    .chrome-ctl svg {
        height: 12px;
    }

    .toolbar {
        height: 49px;
        padding: 6px 6px 0 8px;
        background: #635b5d;
        color: #fff;
    }

    .nav {
        display: flex;
        gap: 10px;
        height: 20px;
        align-items: center;
    }

    .omni {
        width: 6px;
        height: 20px;
        border-radius: 3px;
        background: #c9c9cd;
    }

    .ext {
        display: flex;
        gap: 12px;
        margin-left: auto;
    }

    .bookmarks {
        display: flex;
        justify-content: space-between;
        margin-top: 4px;
    }

    .bookmarks a {
        display: flex;
        align-items: center;
        font-weight: 700;
        color: #fff;
        text-decoration: none;
    }

    .bookmarks svg {
        width: 12px;
        height: 12px;
        margin-right: 5px;
    }

    .bookmarks .other {
        padding-left: 7px;
        border-left: 1px solid #999;
    }

    .router {
        width: 130px;
        padding: 5px 0 0 10px;
        font-family: "Liberation Sans", sans-serif;
    }

    .logo {
        height: 53px;
        padding: 8px 0 0 7px;
        border-radius: 3px;
        background: linear-gradient(#fff, #e4e4e4 20px);
        box-shadow: 0 2px 4px #999;
    }

    .logo svg {
        width: 46px;
        height: 12px;
    }

    .logo p {
        margin-top: 3px;
        font: 20px/22px "Open Sans", sans-serif;
        color: #444;
    }

    .logo b {
        font-weight: 800;
    }

    .logo em {
        color: #3fa65a;
    }

    .config {
        height: 461px;
        margin-top: 8px;
        padding: 1px 2px;
        border: 1px solid #ddd;
        box-shadow: 0 2px 4px #999;
        overflow: hidden;
    }

    .config h2 {
        display: flex;
        align-items: center;
        gap: 12px;
        height: 19px;
        margin-bottom: 15px;
        padding-left: 2px;
        background: #ddd;
        font-size: 10px;
        white-space: nowrap;
        color: #333;
    }

    .config li {
        display: flex;
        align-items: center;
        height: 13px;
        font-size: 10px;
        line-height: 13px;
        white-space: nowrap;
    }

    .config li i {
        width: 12px;
        padding-left: 2px;
        font-weight: 700;
    }

    .config svg {
        width: 15px;
        height: 13px;
        margin-right: 4px;
    }

    .config h2 svg {
        width: 14px;
        height: 14px;
        margin: 0;
    }

    .config .gap { margin-top: 22px; }
    .config .l1 { padding-left: 13px; }
    .config .l2 { padding-left: 24px; }

    .config .on span {
        background: #b9c6e0;
    }

    /* taskbar */
    .taskbar {
        position: relative;
        display: flex;
        flex-direction: column;
        flex: none;
        width: 51px;
        background: #000;
        color: #fff;
    }

    .ghost {
        position: absolute;
        top: 200px;
        left: 0;
        width: 14px;
        height: 241px;
        background: #2b2b2b;
    }

    .taskbar > button {
        position: relative;
        display: flex;
        align-items: center;
        justify-content: center;
        height: 25px;
    }

    .taskbar > button:nth-child(3n) {
        height: 26px;
    }

    .taskbar > .run::after {
        content: "";
        position: absolute;
        inset: 3px 0 3px auto;
        width: 2px;
        background: #76b9ed;
    }

    .taskbar > .cur {
        background: #464646;
    }

    .tray {
        display: flex;
        flex-direction: column;
        align-items: center;
        gap: 7px;
        margin-top: auto;
        padding-bottom: 14px;
        text-align: center;
    }

    .tray .up {
        margin-right: 24px;
    }

    .pair {
        display: flex;
        gap: 6px;
    }

    .tray .kbd {
        width: 20px;
        height: 12px;
    }

    .ime {
        margin: 6px 0 8px;
        font-size: 11px;
    }

    .tray time {
        line-height: 14px;
        white-space: nowrap;
    }

    /* FileZilla */
    .fz {
        position: absolute;
        inset: 21px 131px 28px 80px;
        display: flex;
        flex-direction: column;
        border: 1px solid #4aa3df;
        background: #f1f1f1;
    }

    .fz-title {
        display: flex;
        align-items: center;
        height: 24px;
        padding: 0 12px 0 6px;
        background: #fff;
    }

    .fz-title svg {
        width: 12px;
        height: 12px;
        margin-right: 5px;
    }

    .fz-title .resize {
        align-self: flex-start;
        width: 10px;
        height: 7px;
        margin: 5px 44px 0 auto;
    }

    .fz-title button {
        width: 10px;
        height: 10px;
        margin-left: 27px;
    }

    .fz-title button:nth-of-type(1) {
        margin-left: 0;
    }

    .fz-title button svg {
        width: 10px;
        height: 10px;
        margin: 0;
    }

    .menu {
        display: flex;
        gap: 12px;
        height: 15px;
        padding-left: 5px;
        background: #fff;
    }

    .tools {
        display: flex;
        align-items: center;
        height: 20px;
        padding-left: 1px;
        border-bottom: 1px solid #c4c4c4;
    }

    .tools button {
        display: flex;
        align-items: center;
        justify-content: center;
        width: 19px;
        height: 18px;
    }

    .tools .on {
        background: #cfe6f8;
    }

    .tools .sep {
        width: 1px;
        height: 15px;
        margin: 0 2px;
        background: #bbb;
    }

    .quick {
        display: flex;
        align-items: center;
        height: 28px;
        padding-left: 3px;
        white-space: nowrap;
    }

    .quick input {
        width: 90px;
        height: 19px;
        margin: 0 9px 0 4px;
        padding: 0 3px;
        border: 1px solid #aaa;
        background: #fff;
        font: inherit;
        color: inherit;
    }

    .quick #pass {
        overflow: hidden;
        font: 28px/16px "Liberation Sans", sans-serif;
        text-indent: -5px;
        color: #000;
    }

    .quick .port {
        width: 38px;
    }

    .quick .go {
        width: 70px;
        height: 20px;
        border: 2px solid #2a9be0;
        background: #e2e2e2;
        line-height: 16px;
    }

    .quick .drop {
        display: flex;
        align-items: center;
        justify-content: center;
        width: 15px;
        height: 19px;
        margin-left: 2px;
        border: 1px solid #bbb;
        background: #e5e5e5;
    }

    .quick .drop .caret {
        border-width: 3px 3px 0;
        border-top-color: #111;
    }

    .sunk {
        border-top: 2px solid #949494;
    }

    .log {
        display: flex;
        height: 77px;
        border-left: 1px solid #999;
        background: #fff;
    }

    .lines {
        flex: 1;
        padding: 1px 0 0 1px;
    }

    .lines p:nth-child(even) {
        line-height: 16px;
    }

    .log span {
        display: inline-block;
        width: 32px;
    }

    .sb {
        display: flex;
        flex-direction: column;
        flex: none;
        width: 13px;
        margin-left: auto;
        background: #f1f1f1;
    }

    .sb button {
        height: 14px;
    }

    .sb svg {
        width: 10px;
        height: 10px;
        margin: 2px 1px;
    }

    .sb i {
        width: 12px;
        margin: auto 0 0 0;
        background: #cdcdcd;
    }

    .sb .t1 { height: 14px; }
    .sb .t2 { height: 27px; }
    .sb .t3 { height: 63px; margin-bottom: 36px; }

    .panes {
        display: flex;
        gap: 5px;
        flex: 1;
        min-height: 0;
        margin-top: 5px;
    }

    .pane {
        display: flex;
        flex: 1;
        flex-direction: column;
        min-width: 0;
        border-left: 1px solid #999;
    }

    .local {
        flex: 1 1 5px;
    }

    .site {
        display: flex;
        align-items: center;
        height: 20px;
        border-bottom: 1px solid #888;
        background: #fff;
    }

    .site label {
        width: 50px;
        height: 18px;
        padding: 0 4px;
        border: 1px solid #666;
        border-width: 0 1px 1px 0;
        background: #f1f1f1;
        line-height: 18px;
        white-space: nowrap;
    }

    .site select {
        flex: 1;
        height: 17px;
        padding-left: 3px;
        appearance: none;
        border: none;
        background: none;
        font: inherit;
        color: inherit;
    }

    .site svg {
        width: 8px;
        height: 8px;
        margin-right: 2px;
    }

    .tree {
        display: flex;
        height: 132px;
        overflow: hidden;
        background: #fff;
    }

    .tree ul {
        padding-top: 1px;
    }

    .tree li {
        position: relative;
        display: flex;
        align-items: center;
        height: 15px;
    }

    .tree li:nth-child(3n) {
        height: 14px;
    }

    .tree li svg {
        width: 11px;
        height: 13px;
        margin: 0 5px 0 1px;
    }

    .box {
        flex: none;
        width: 8px;
        height: 8px;
        border: 1px solid #a5a5b5;
        font-size: 9px;
        line-height: 5px;
        text-align: center;
        color: #336;
    }

    .box:empty {
        border-color: transparent;
    }

    .dash {
        width: 5px;
        border-top: 1px dotted #aaa;
    }

    .d2 { padding-left: 67px; }
    .d1 { padding-left: 52px; }
    .d0 { padding-left: 36px; }
    .r0 { padding-left: 5px; }
    .r1 { padding-left: 20px; }
    .r2 { padding-left: 36px; }

    .guide {
        position: absolute;
        top: 0;
        left: 40px;
        width: 17px;
        height: 100%;
        border: 1px dotted #bbb;
        border-width: 0 1px;
        z-index: 0;
    }

    .d2 .guide::after {
        content: "";
        position: absolute;
        left: 31px;
        height: 100%;
        border-left: 1px dotted #bbb;
    }

    .d0 .guide {
        border-right: none;
    }

    .tree .box {
        position: relative;
        background: #fff;
    }

    .tree .box:empty {
        background: none;
    }

    .hl {
        background: #ededed;
    }

    .list {
        display: flex;
        flex: 1;
        min-height: 0;
        margin-top: 5px;
        overflow: hidden;
        background: #fff;
    }

    table {
        height: max-content;
        table-layout: fixed;
        border-collapse: collapse;
        line-height: 15px;
    }

    .ltable { width: 343px; }
    .rtable { width: 403px; }
    .queue table { width: 579px; }

    .c49 { width: 49px; }
    .c61 { width: 61px; }
    .c65 { width: 65px; }
    .c66 { width: 66px; }
    .c82 { width: 82px; }
    .c98 { width: 98px; }
    .c122 { width: 122px; }
    .c146 { width: 146px; }
    .c147 { width: 147px; }

    th, td {
        padding: 0 4px 0 5px;
        overflow: hidden;
        text-align: left;
        white-space: nowrap;
    }

    th {
        position: relative;
        height: 20px;
        border-right: 1px solid #e3e3e3;
        font-weight: 400;
    }

    .sort::before {
        content: "";
        position: absolute;
        top: 1px;
        left: 50%;
        width: 5px;
        height: 5px;
        border: 1px solid #999;
        border-width: 1px 0 0 1px;
        transform: rotate(45deg);
    }

    td {
        height: 15px;
    }

    tr:nth-child(even) td {
        height: 16px;
    }

    td svg {
        display: inline-block;
        width: 10px;
        height: 14px;
        margin-right: 3px;
        vertical-align: middle;
    }

    .num {
        text-align: right;
    }

    .mid {
        text-align: center;
    }

    .sel td {
        background: #33a3ee;
        color: #fff;
    }

    .sel td:first-child {
        background: linear-gradient(to right, #fff 16px, #33a3ee 16px);
    }

    .sum {
        height: 20px;
        padding-left: 2px;
        border-top: 1px solid #ddd;
        line-height: 19px;
    }

    .queue {
        height: 86px;
        margin-top: 4px;
        border: 1px solid #999;
        border-width: 1px 0 2px 1px;
        background: #fff;
        overflow: hidden;
    }

    .queue .doc {
        margin-right: 8px;
    }

    .progress {
        display: flex;
        align-items: center;
        height: 15px;
    }

    .el {
        width: 112px;
        margin-left: 42px;
    }

    .left {
        width: 87px;
    }

    .bar {
        position: relative;
        width: 84px;
        height: 14px;
        margin-right: 16px;
        border: 1px solid #555;
        background: #eee;
        line-height: 12px;
        text-align: center;
    }

    .bar i {
        position: absolute;
        inset: 0 auto 0 0;
        background: linear-gradient(#18a02c, #12d42e 50%, #079018);
    }

    .bar b {
        position: relative;
        font-weight: 400;
    }

    .qtabs {
        display: flex;
        height: 22px;
        padding-left: 4px;
        border-bottom: 1px solid #ddd;
        background: linear-gradient(#d6d6d6, #f1f1f1 18px);
    }

    .qtabs button {
        height: 18px;
        padding: 0 6px;
        border: 1px solid #c8c8c8;
        border-width: 0 1px 1px 0;
        border-radius: 0 0 2px 2px;
        background: #e9e9e9;
    }

    .qtabs .on {
        background: #fafafa;
        color: #000;
    }

    .fz footer {
        display: flex;
        align-items: center;
        gap: 2px;
        height: 17px;
        padding-right: 118px;
        justify-content: flex-end;
    }

    .fz footer span {
        margin-left: 3px;
    }

    /* TeamViewer panel */
    .tv {
        position: absolute;
        right: 51px;
        bottom: 0;
        width: 205px;
        border: 1px solid #333;
        border-bottom: none;
        background: #6f6f6f;
        color: #222;
    }

    .handle {
        position: absolute;
        top: 91px;
        left: -21px;
        width: 21px;
        height: 42px;
        clip-path: polygon(4px 0, 100% 0, 100% 100%, 0 30px, 0 4px);
        background: #6f6f6f;
    }

    .handle svg {
        width: 10px;
        height: 10px;
        margin: -14px 0 0 6px;
    }

    .tv-top {
        height: 91px;
        padding: 6px;
        background: #003764;
        color: #a3a9ad;
    }

    .tv-head {
        display: flex;
        height: 52px;
    }

    .tvlogo {
        width: 30px;
        height: 38px;
        margin-right: 8px;
    }

    .tv-head div {
        flex: 1;
    }

    .tv-head h3 {
        margin-top: 2px;
        font-size: 17px;
        font-weight: 400;
        line-height: 22px;
    }

    .tv-head p {
        width: 122px;
        margin-left: 2px;
        font-size: 11px;
        line-height: 13px;
    }

    .tv-head button {
        align-self: flex-start;
        margin: 12px 5px;
    }

    .tv-icons {
        display: flex;
        gap: 14px;
        padding: 7px 4px;
    }

    .tv-icons button {
        width: 13px;
        height: 13px;
    }

    .tv-icons svg {
        width: 13px;
        height: 13px;
    }

    .tv-list {
        height: 61px;
        padding: 0 4px;
    }

    .tv-list h4 {
        display: flex;
        align-items: center;
        height: 23px;
        font-size: 13px;
        font-weight: 400;
    }

    .tv-list h4 svg {
        margin-left: auto;
    }

    .tv-list .caret {
        margin-right: 5px;
        border-top-color: #333;
    }

    .peer {
        display: flex;
        align-items: center;
        height: 36px;
        gap: 4px;
        padding-left: 2px;
        font-family: Roboto, sans-serif;
        white-space: nowrap;
    }

    .tv-list .peer .caret {
        margin: 0 0 0 auto;
        border-top-color: #555;
    }

    .peer .cursor {
        width: 11px;
        height: 11px;
        margin: 0 2px;
    }

    .tv-foot {
        height: 22px;
        padding-right: 8px;
        background: #222;
        line-height: 20px;
        text-align: right;
    }

    .tv-foot a {
        color: #888;
    }
</style>
